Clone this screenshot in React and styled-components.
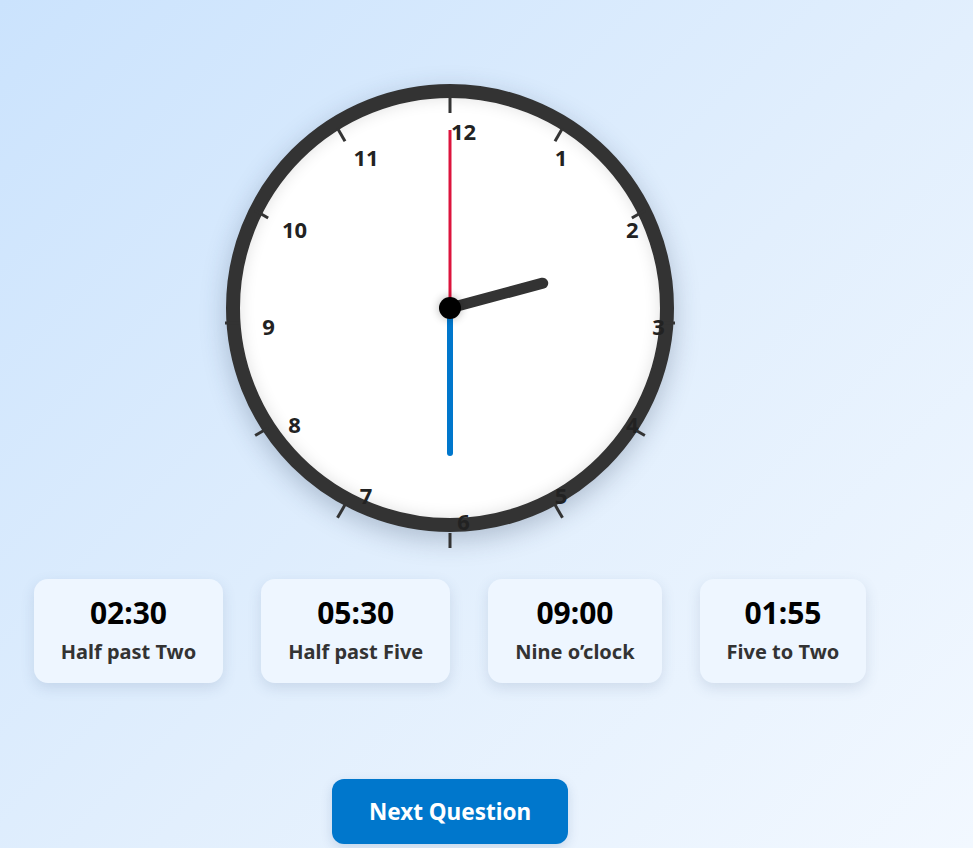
import React from "react";
import styled, { createGlobalStyle } from "styled-components";

const GlobalStyle = createGlobalStyle`
  html, body {
    margin: 0;
    padding: 0;
  }
  body {
    font-family: "Noto Sans", "Open Sans", Arial, sans-serif;
    background: linear-gradient(135deg, #cbe3fd 0%, #e2effd 55%, #f2f8ff 100%);
    min-height: 100vh;
  }
`;

const options = [
  { time: "02:30", label: "Half past Two" },
  { time: "05:30", label: "Half past Five" },
  { time: "09:00", label: "Nine o\u2019clock" },
  { time: "01:55", label: "Five to Two" },
];

const hours = [12, 1, 2, 3, 4, 5, 6, 7, 8, 9, 10, 11];

// point on a circle of radius r around (cx, cy), angle in degrees from 12 o'clock
const polar = (cx, cy, r, deg) => {
  const a = (deg * Math.PI) / 180;
  return [cx + Math.sin(a) * r, cy - Math.cos(a) * r];
};

function ClockFace({ hour, minute, second }) {
  const hourDeg = (hour % 12) * 30 + minute * 0.5;
  const minDeg = minute * 6;
  const secDeg = second * 6;
  const [hx, hy] = polar(210, 210, 96, hourDeg);
  const [mx, my] = polar(210, 210, 145, minDeg);
  const [sx, sy] = polar(210, 210, 178, secDeg);

  return (
    <FaceSvg viewBox="0 0 420 420" width="420" height="420">
      <defs>
        <filter id="dotShadow" x="-100%" y="-100%" width="300%" height="300%">
          <feGaussianBlur in="SourceAlpha" stdDeviation="5" />
          <feComponentTransfer>
            <feFuncA type="linear" slope="0.3" />
          </feComponentTransfer>
          <feMerge>
            <feMergeNode />
            <feMergeNode in="SourceGraphic" />
          </feMerge>
        </filter>
      </defs>
      {hours.map((h, i) => {
        const [x1, y1] = polar(210, 225, 210, i * 30);
        const [x2, y2] = polar(210, 225, 225, i * 30);
        return <line key={"t" + h} x1={x1} y1={y1} x2={x2} y2={y2} stroke="#333" strokeWidth="3" />;
      })}
      {hours.map((h, i) => {
        const [x, y] = polar(223.5, 228, 195, i * 30);
        return (
          <NumberText key={h} x={x} y={y} textAnchor="middle" dominantBaseline="central">
            {h}
          </NumberText>
        );
      })}
      <line x1="210" y1="210" x2={hx} y2={hy} stroke="#333" strokeWidth="11" strokeLinecap="round" />
      <line x1="210" y1="210" x2={mx} y2={my} stroke="#0077cc" strokeWidth="6" strokeLinecap="round" />
      <line x1="210" y1="210" x2={sx} y2={sy} stroke="#dc143c" strokeWidth="3" />
      <circle cx="210" cy="210" r="11" fill="#000" filter="url(#dotShadow)" />
    </FaceSvg>
  );
}

export default function App() {
  return (
    <>
      <GlobalStyle />
      <Page>
        <Clock>
          <ClockFace hour={2} minute={30} second={0} />
        </Clock>

        <Options>
          {options.map((o) => (
            <Option key={o.time}>
              <Time>{o.time}</Time>
              <Label>{o.label}</Label>
            </Option>
          ))}
        </Options>

        <NextButton>Next Question</NextButton>
      </Page>
    </>
  );
}

const Page = styled.div`
  width: 900px;
  padding-top: 84px;
  display: flex;
  flex-direction: column;
  align-items: center;
`;

const Clock = styled.div`
  width: 420px;
  height: 420px;
  border: 14px solid #333;
  border-radius: 50%;
  background: #fff;
  box-shadow: 0 8px 26px rgba(40, 60, 90, 0.27), inset 0 0 16px rgba(0, 0, 0, 0.12);
`;

const FaceSvg = styled.svg`
  display: block;
  overflow: visible;
`;

const NumberText = styled.text`
  font-family: "Noto Sans", "Open Sans", Arial, sans-serif;
  font-size: 22px;
  font-weight: 700;
  fill: #222;
`;

const Options = styled.div`
  display: flex;
  justify-content: center;
  gap: 38px;
  margin-top: 47px;
`;

const Option = styled.div`
  background: #eef6ff;
  border-radius: 14px;
  padding: 15px 27px 16px;
  box-shadow: 0 5px 14px rgba(60, 90, 130, 0.15);
  text-align: center;
`;

const Time = styled.div`
  font-size: 30px;
  font-weight: 700;
  color: #000;
  line-height: 38px;
`;

const Label = styled.div`
  font-size: 20px;
  font-weight: 700;
  color: #333;
  line-height: 30px;
  margin-top: 5px;
`;

const NextButton = styled.button`
  margin-top: 96px;
  height: 65px;
  padding: 0 37px;
  border: none;
  border-radius: 12px;
  background: #0077cc;
  color: #fff;
  font-family: "Noto Sans", "Open Sans", Arial, sans-serif;
  font-size: 22.5px;
  font-weight: 700;
  box-shadow: 0 4px 12px rgba(0, 60, 120, 0.15);
  cursor: pointer;
`;
